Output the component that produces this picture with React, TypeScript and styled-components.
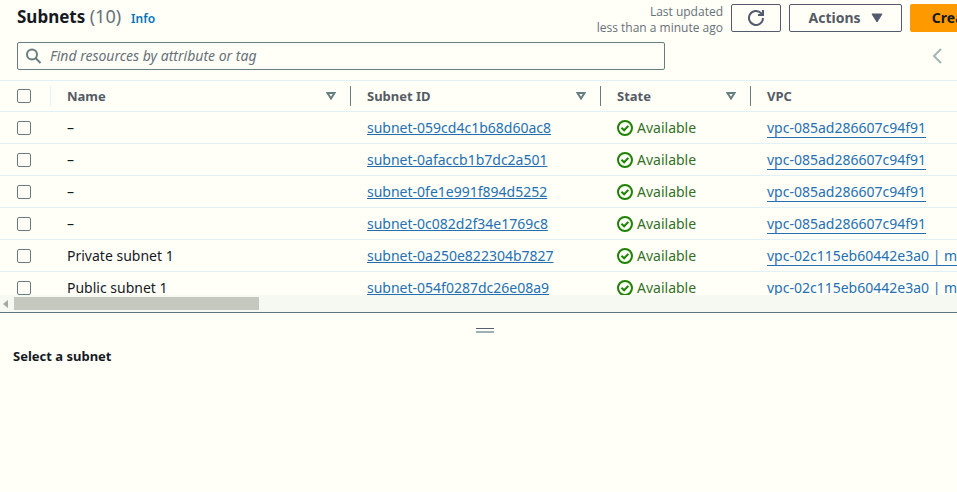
import React from "react";
import styled, { createGlobalStyle } from "styled-components";

const colors = {
  page: "#fffff8",
  ink: "#16191f",
  heading: "#545b64",
  muted: "#687078",
  line: "#e0f2f7",
  control: "#687d80",
  link: "#2470b3",
  success: "#1d8102",
};

const GlobalStyle = createGlobalStyle`
  *, *::before, *::after { box-sizing: border-box; }
  body {
    margin: 0;
    overflow: hidden;
    background: ${colors.page};
    color: ${colors.ink};
    font: 14px/20px "Noto Sans", "Open Sans", sans-serif;
  }
  button, input { font: inherit; }
`;

const Page = styled.div`
  display: flex;
  flex-direction: column;
  height: 100vh;
  overflow: hidden;
`;

const ListPanel = styled.main`
  display: flex;
  flex: 1;
  flex-direction: column;
  min-height: 0;
  overflow: hidden;
`;

const Header = styled.header`
  display: flex;
  align-items: flex-start;
  gap: 8px;
  width: calc(100% + 112px);
  padding: 4px 17px 0;
`;

const TitleGroup = styled.div`
  display: flex;
  flex: 1;
  align-items: baseline;
  gap: 10px;
  line-height: 24px;
`;

const Title = styled.h1`
  margin: 0;
  font-size: 17px;
  font-weight: 700;
`;

const Counter = styled.span`
  color: ${colors.muted};
  font-size: 18px;
  font-weight: 400;
`;

const InfoLink = styled.a`
  color: #0073bb;
  font-size: 12px;
  font-weight: 600;
  text-decoration: none;
`;

const Updated = styled.p`
  margin: 0;
  color: ${colors.muted};
  font-family: "Open Sans", "Noto Sans", sans-serif;
  font-size: 12px;
  line-height: 16px;
  text-align: right;
`;

const Button = styled.button<{ $primary?: boolean; $width: number }>`
  display: flex;
  flex: none;
  align-items: center;
  justify-content: center;
  gap: 10px;
  width: ${(p) => p.$width}px;
  height: 28px;
  padding: 0 16px;
  border: 1px solid ${(p) => (p.$primary ? "#ff9900" : "#545b6e")};
  border-radius: 2px;
  background: ${(p) => (p.$primary ? "#ff9900" : "transparent")};
  color: ${(p) => (p.$primary ? colors.ink : colors.heading)};
  font-weight: 700;
  white-space: nowrap;
`;

const FilterBar = styled.div`
  display: flex;
  align-items: center;
  justify-content: space-between;
  padding: 6px 14px 10px 17px;
`;

const SearchBox = styled.label`
  display: flex;
  flex: 0 1 648px;
  align-items: center;
  gap: 8px;
  height: 28px;
  padding: 0 8px;
  border: 1px solid ${colors.control};
  border-radius: 2px;
`;

const SearchInput = styled.input`
  flex: 1;
  min-width: 0;
  padding: 0;
  border: 0;
  outline: 0;
  background: transparent;
  color: ${colors.ink};
  &::placeholder {
    color: ${colors.muted};
    font-style: italic;
    opacity: 1;
  }
`;

const PageButton = styled.button`
  display: flex;
  padding: 0;
  border: 0;
  background: transparent;
`;

const TableViewport = styled.div`
  flex: 1;
  min-height: 0;
  overflow: hidden;
`;

const Table = styled.table`
  width: 100%;
  min-width: 1000px;
  border-collapse: separate;
  border-spacing: 0;
  border-top: 1px solid ${colors.line};
  table-layout: fixed;
`;

const Column = styled.col<{ $width?: number }>`
  width: ${(p) => (p.$width ? `${p.$width}px` : "auto")};
`;

const HeadCell = styled.th`
  height: 31px;
  padding: 5px 0;
  border-bottom: 1px solid ${colors.line};
  color: ${colors.heading};
  font-size: 13px;
  font-weight: 700;
  text-align: left;
`;

const HeadContent = styled.div<{ $rule?: string; $select?: boolean }>`
  display: flex;
  align-items: center;
  justify-content: space-between;
  height: 20px;
  padding: 0 14px 0 ${(p) => (p.$select ? 17 : 16)}px;
  border-right: 1px solid ${(p) => p.$rule ?? "transparent"};
`;

const Cell = styled.td<{ $select?: boolean }>`
  height: 32px;
  padding: 0 0 0 ${(p) => (p.$select ? 17 : 16)}px;
  border-bottom: 1px solid ${colors.line};
  white-space: nowrap;
`;

const Checkbox = styled.input`
  display: block;
  width: 14px;
  height: 14px;
  margin: 0;
  border: 1px solid ${colors.control};
  border-radius: 2px;
  appearance: none;
  background: ${colors.page};
  &:checked { background: ${colors.link}; }
`;

const SubnetLink = styled.a`
  color: ${colors.link};
  text-decoration: underline;
  text-decoration-thickness: 1px;
  text-underline-offset: 1px;
`;

const VpcLink = styled.a`
  display: inline-block;
  border-bottom: 1px solid ${colors.link};
  color: ${colors.link};
  line-height: 18px;
  text-decoration: none;
  vertical-align: middle;
`;

const Status = styled.span`
  display: flex;
  align-items: center;
  gap: 4px;
  color: #347026;
`;

const Scrollbar = styled.div`
  display: flex;
  flex: none;
  align-items: center;
  gap: 6px;
  height: 17px;
  padding-left: 3px;
  background: #f6f9f2;
`;

const ScrollThumb = styled.div`
  width: 245px;
  height: 13px;
  background: #c5c8be;
`;

const DetailPanel = styled.section`
  flex: 0 0 180px;
  border-top: 1px solid #5a7684;
`;

const HandleRow = styled.div`
  display: flex;
  justify-content: center;
  padding: 15px 0 0 13px;
`;

const ResizeHandle = styled.button`
  width: 18px;
  height: 5px;
  padding: 0;
  border: 0;
  border-top: 1px solid #596070;
  border-bottom: 2px solid #9bafb5;
  background: transparent;
`;

const DetailTitle = styled.h2`
  margin: 13px 13px 0;
  font-size: 13px;
  font-weight: 700;
  line-height: 20px;
`;

const SearchIcon = () => (
  <svg width="16" height="16" viewBox="0 0 16 16" fill="none" stroke={colors.control} strokeWidth="2" aria-hidden="true">
    <circle cx="6" cy="6.5" r="5" />
    <path d="M9.5 10l5 5" />
  </svg>
);

const RefreshIcon = () => (
  <svg width="16" height="16" viewBox="0 0 16 16" fill="none" stroke="#545b6e" strokeWidth="2" aria-hidden="true">
    <path d="M15 8a7 7 0 1 1-2.1-5L15 5" />
    <path d="M15 0v5h-5" />
  </svg>
);

const CaretIcon = () => (
  <svg width="12" height="10" viewBox="0 0 12 10" aria-hidden="true">
    <path d="M1 1h10L6 9z" fill="#545b6e" stroke="#545b6e" strokeLinejoin="round" />
  </svg>
);

const SortIcon = () => (
  <svg width="10" height="8" viewBox="0 0 10 8" fill="none" stroke={colors.control} strokeWidth="2" aria-hidden="true">
    <path d="M1.5 1h7L5 6.5z" />
  </svg>
);

const PreviousIcon = () => (
  <svg width="12" height="16" viewBox="0 0 12 16" fill="none" stroke="#a3b7b9" strokeWidth="2" aria-hidden="true">
    <path d="M10 1L3 8l7 7" />
  </svg>
);

const CheckIcon = () => (
  <svg width="16" height="16" viewBox="0 0 16 16" fill="none" stroke={colors.success} strokeWidth="2" aria-hidden="true">
    <circle cx="8" cy="8" r="7" />
    <path d="M4.5 7.8l2.6 2.5 4.3-4.4" />
  </svg>
);

const ScrollArrow = () => (
  <svg width="5" height="8" viewBox="0 0 5 8" aria-hidden="true">
    <path d="M5 0v8L0 4z" fill="#a3a8a2" />
  </svg>
);

const headings = [
  { label: "Name", sortable: true },
  { label: "Subnet ID", sortable: true },
  { label: "State", sortable: true },
  { label: "VPC", sortable: false },
];

const subnets = [
  { name: "–", id: "subnet-059cd4c1b68d60ac8", vpc: "vpc-085ad286607c94f91" },
  { name: "–", id: "subnet-0afaccb1b7dc2a501", vpc: "vpc-085ad286607c94f91" },
  { name: "–", id: "subnet-0fe1e991f894d5252", vpc: "vpc-085ad286607c94f91" },
  { name: "–", id: "subnet-0c082d2f34e1769c8", vpc: "vpc-085ad286607c94f91" },
  { name: "Private subnet 1", id: "subnet-0a250e822304b7827", vpc: "vpc-02c115eb60442e3a0 | my" },
  { name: "Public subnet 1", id: "subnet-054f0287dc26e08a9", vpc: "vpc-02c115eb60442e3a0 | my" },
];

export default function App() {
  return (
    <Page>
      <GlobalStyle />
      <ListPanel>
        <Header>
          <TitleGroup>
            <Title>
              Subnets <Counter>(10)</Counter>
            </Title>
            <InfoLink href="#info">Info</InfoLink>
          </TitleGroup>
          <Updated>
            Last updated
            <br />
            less than a minute ago
          </Updated>
          <Button $width={50} aria-label="Refresh">
            <RefreshIcon />
          </Button>
          <Button $width={113}>
            Actions <CaretIcon />
          </Button>
          <Button $width={142} $primary>
            Create subnet
          </Button>
        </Header>
        <FilterBar>
          <SearchBox>
            <SearchIcon />
            <SearchInput type="text" aria-label="Find resources" placeholder="Find resources by attribute or tag" />
          </SearchBox>
          <PageButton aria-label="Previous page">
            <PreviousIcon />
          </PageButton>
        </FilterBar>
        <TableViewport>
          <Table>
            <colgroup>
              <Column $width={51} />
              <Column $width={300} />
              <Column $width={250} />
              <Column $width={150} />
              <Column />
            </colgroup>
            <thead>
              <tr>
                <HeadCell>
                  <HeadContent $select $rule={colors.line}>
                    <Checkbox type="checkbox" aria-label="Select all subnets" />
                  </HeadContent>
                </HeadCell>
                {headings.map(({ label, sortable }) => (
                  <HeadCell key={label} scope="col">
                    <HeadContent $rule={sortable ? colors.control : undefined}>
                      {label}
                      {sortable && <SortIcon />}
                    </HeadContent>
                  </HeadCell>
                ))}
              </tr>
            </thead>
            <tbody>
              {subnets.map((subnet) => (
                <tr key={subnet.id}>
                  <Cell $select>
                    <Checkbox type="checkbox" aria-label={`Select ${subnet.id}`} />
                  </Cell>
                  <Cell>{subnet.name}</Cell>
                  <Cell>
                    <SubnetLink href={`#${subnet.id}`}>{subnet.id}</SubnetLink>
                  </Cell>
                  <Cell>
                    <Status>
                      <CheckIcon />
                      Available
                    </Status>
                  </Cell>
                  <Cell>
                    <VpcLink href="#vpc">{subnet.vpc}</VpcLink>
                  </Cell>
                </tr>
              ))}
            </tbody>
          </Table>
        </TableViewport>
        <Scrollbar>
          <ScrollArrow />
          <ScrollThumb />
        </Scrollbar>
      </ListPanel>
      <DetailPanel>
        <HandleRow>
          <ResizeHandle aria-label="Resize panel" />
        </HandleRow>
        <DetailTitle>Select a subnet</DetailTitle>
      </DetailPanel>
    </Page>
  );
}
